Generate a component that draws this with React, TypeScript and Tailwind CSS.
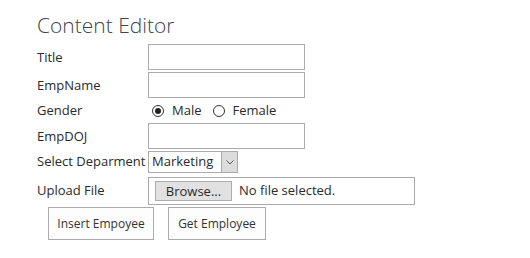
import React from "react";

function Radio({ checked }: { checked?: boolean }) {
  return (
    <span className="w-[12px] h-[12px] rounded-full border border-[#333] bg-white flex items-center justify-center">
      {checked && <span className="w-[6px] h-[6px] rounded-full bg-[#222]" />}
    </span>
  );
}

export default function App() {
  const font = { fontFamily: '"Open Sans", "Noto Sans", sans-serif' };
  return (
    <div className="w-[530px] h-[258px] bg-white text-[#2a2a2a] pl-[37px] pt-[10px]" style={font}>
      {/* Heading */}
      <h1 className="h-[30px] text-[21px] font-light text-[#444] leading-[30px]">Content Editor</h1>

      <div className="flex flex-col text-[13px] mt-[4px]">
        {/* Title */}
        <div className="flex items-center h-[26px]">
          <span className="w-[111px] pt-[2px]">Title</span>
          <div className="w-[157px] h-[26px] border border-[#ababab] bg-white" />
        </div>

        {/* EmpName */}
        <div className="flex items-center h-[26px] mt-[2px]">
          <span className="w-[111px] pt-[2px]">EmpName</span>
          <div className="w-[157px] h-[26px] border border-[#ababab] bg-white" />
        </div>

        {/* Gender */}
        <div className="flex items-center h-[25px]">
          <span className="w-[115px]">Gender</span>
          <Radio checked />
          <span className="ml-[8px]">Male</span>
          <span className="ml-[11px]">
            <Radio />
          </span>
          <span className="ml-[8px]">Female</span>
        </div>

        {/* EmpDOJ */}
        <div className="flex items-center h-[26px]">
          <span className="w-[111px] pt-[2px]">EmpDOJ</span>
          <div className="w-[157px] h-[26px] border border-[#ababab] bg-white" />
        </div>

        {/* Department */}
        <div className="flex items-center h-[22px] mt-[2px]">
          <span className="w-[111px] whitespace-nowrap">Select Deparment</span>
          <div className="w-[90px] h-[22px] border border-[#ababab] bg-white flex items-center">
            <span className="flex-1 pl-[3px]">Marketing</span>
            <span className="w-[16px] h-[20px] bg-[#dcdcdc] border-l border-[#ababab] flex items-center justify-center">
              <svg width="8" height="5" viewBox="0 0 8 5">
                <path d="M0.5 0.5 L4 4 L7.5 0.5" stroke="#555" fill="none" strokeWidth="1" />
              </svg>
            </span>
          </div>
        </div>

        {/* Upload */}
        <div className="flex items-center h-[28px] mt-[4px]">
          <span className="w-[111px]">Upload File</span>
          <div className="w-[267px] h-[28px] border border-[#ababab] bg-white flex items-center pl-[6px]">
            <span className="h-[20px] w-[77px] justify-center bg-[#e1e1e1] border border-[#adadad] flex items-center leading-none">
              Browse...
            </span>
            <span className="ml-[7px]">No file selected.</span>
          </div>
        </div>

        {/* Buttons */}
        <div className="flex items-center mt-[2px] pl-[11px] gap-[14px] text-[12px]">
          <button className="w-[106px] h-[33px] border border-[#ababab] bg-[#fdfdfd] text-[#333]">Insert Empoyee</button>
          <button className="w-[98px] h-[33px] border border-[#ababab] bg-[#fdfdfd] text-[#333]">Get Employee</button>
        </div>
      </div>
    </div>
  );
}
